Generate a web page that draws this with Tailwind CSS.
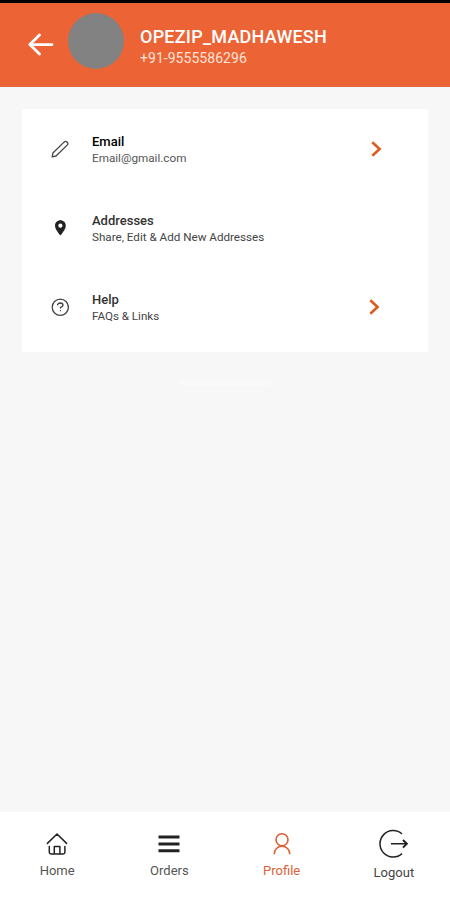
<!DOCTYPE html>
<html lang="en">
<head>
<meta charset="utf-8">
<title>Profile</title>
<script src="https://cdn.jsdelivr.net/npm/@tailwindcss/browser@4"></script>
</head>
<body class="font-[Roboto,sans-serif]">
<div class="flex h-[900px] w-[450px] flex-col overflow-hidden bg-[#f7f7f7]">
  <div class="h-[3px] shrink-0 bg-black"></div>
  <header class="flex h-[84px] shrink-0 items-start border-b border-[#e0683f] bg-[#ec6435] pl-7 text-white">
    <svg class="mt-[30px] h-6 w-[26px]" viewBox="0 0 26 24" fill="none" stroke="currentColor" stroke-width="2.8" stroke-linecap="round" stroke-linejoin="round"><path d="M24 11.6H2M11.500 2L1.800 11.600L11.500 21"/></svg>
    <div class="mt-[10px] ml-[14px] size-14 rounded-full bg-[#828282]"></div>
    <div class="mt-[22px] ml-4 whitespace-nowrap">
      <h1 class="text-[18px] leading-[23px] font-medium tracking-[0.24px]">OPEZIP_MADHAWESH</h1>
      <p class="text-[14px] leading-[20px] tracking-[0.04px] text-[#ffe3d6]">+91-9555586296</p>
    </div>
  </header>

  <main class="flex-1 px-[22px] pt-[22px]">
    <div class="h-[243px] w-[406px] bg-white">
      <div class="flex h-[79px] items-center pl-[29px]">
        <svg class="size-[18px]" viewBox="0 0 18 18" fill="none" stroke="#444" stroke-width="1.300" stroke-linejoin="round"><path d="M1.200 16.800L1.900 13L13.300 1.900Q14.500 1 15.600 1.700L16.600 2.700Q17.300 3.800 16.400 4.900L5 16Z"/></svg>
        <div class="ml-[23px] flex-1 pt-[2px] whitespace-nowrap">
          <h2 class="text-[13px] leading-[17px] font-medium text-black">Email</h2>
          <p class="text-[11.700px] leading-[16px] text-[#555]">Email@gmail.com</p>
        </div>
        <svg class="mr-[46px] h-4 w-[11px]" viewBox="0 0 11 16" fill="none" stroke="#dc5c20" stroke-width="2.600"><path d="M1.300 1.200L8.600 8L1.300 14.800"/></svg>
      </div>
      <div class="flex h-[79px] items-center pl-[29px]">
        <svg class="size-[18px]" viewBox="0 0 18 18" fill="#222"><path fill-rule="evenodd" d="M9.400 1.300C6.300 1.300 4 3.700 4 6.700C4 10.600 9.400 16.400 9.400 16.400S14.800 10.600 14.800 6.700C14.800 3.700 12.500 1.300 9.400 1.300ZM9.400 4.600A2.100 2.100 0 1 1 9.400 8.800A2.100 2.100 0 1 1 9.400 4.600Z"/></svg>
        <div class="ml-[23px] flex-1 pt-[2px] whitespace-nowrap">
          <h2 class="text-[13px] leading-[17px] font-medium text-[#333]">Addresses</h2>
          <p class="text-[11.650px] leading-[16px] text-[#444]">Share, Edit &amp; Add New Addresses</p>
        </div>
      </div>
      <div class="flex h-[79px] items-center pl-[29px]">
        <svg class="size-[18px]" viewBox="0 0 18 18" fill="none" stroke="#444" stroke-width="1.300" stroke-linecap="round"><circle cx="9.300" cy="9.200" r="8.100"/><path d="M6.600 6.800Q7.200 5 9.300 5Q12 5.200 12 7.200Q11.800 8.700 9.500 9.400V10M9.400 12.600V12.700"/></svg>
        <div class="ml-[23px] flex-1 pt-[2px] whitespace-nowrap">
          <h2 class="text-[13px] leading-[17px] font-medium text-[#333]">Help</h2>
          <p class="text-[11.600px] leading-[16px] text-[#444]">FAQs &amp; Links</p>
        </div>
        <svg class="mr-[48px] h-4 w-[11px]" viewBox="0 0 11 16" fill="none" stroke="#dc5c20" stroke-width="2.600"><path d="M1.300 1.200L8.600 8L1.300 14.800"/></svg>
      </div>
    </div>
    <div class="mx-auto mt-[28px] h-[6px] w-[92px] rounded-full bg-[#f9f9f9]"></div>
  </main>

  <nav class="grid h-[88px] shrink-0 grid-cols-4 bg-white pl-[1px] text-[13px] leading-4 text-[#555]">
    <div class="flex flex-col items-center pt-[20px]">
      <svg class="h-6 w-[24px]" viewBox="0 0 24 24" fill="none" stroke="#222" stroke-width="1.500" stroke-linecap="round" stroke-linejoin="round"><path d="M2.400 11.400L12 2L21.600 11.400M4.300 14.500V20.300Q4.300 22 6 22H18.200Q19.900 22 19.900 20.300V14.500M9.300 21.800V14.600H14.900V21.800"/></svg>
      <span class="mt-[7px]">Home</span>
    </div>
    <div class="flex flex-col items-center pt-[20px]">
      <svg class="h-6 w-[22px]" viewBox="0 0 22 24" fill="#222"><path d="M.5 3.500H21.500V6.500H.5ZM.5 10.500H21.500V13.500H.5ZM.5 17.300H21.500V20.300H.5Z"/></svg>
      <span class="mt-[7px]">Orders</span>
    </div>
    <div class="flex flex-col items-center pt-[20px] text-[#dc6236]">
      <svg class="h-6 w-[22px]" viewBox="0 0 22 24" fill="none" stroke="currentColor" stroke-width="1.600"><circle cx="11" cy="7.800" r="6"/><path d="M3.200 22.200C3.300 17.500 6.500 14.200 11 14.200S18.700 17.500 18.800 22.200"/></svg>
      <span class="mt-[7px]">Profile</span>
    </div>
    <div class="flex flex-col items-center pt-[16px] text-[#444]">
      <svg class="h-[32px] w-[30px]" viewBox="0 0 30 32" fill="none" stroke="#222" stroke-width="1.500"><path d="M23 6A13.200 13.200 0 1 0 23 25.600M12 15.800H27"/><path d="M24 12L27.800 15.800L24 19.600" stroke-width="2"/></svg>
      <span class="mt-[5px]">Logout</span>
    </div>
  </nav>
</div>
</body>
</html>
